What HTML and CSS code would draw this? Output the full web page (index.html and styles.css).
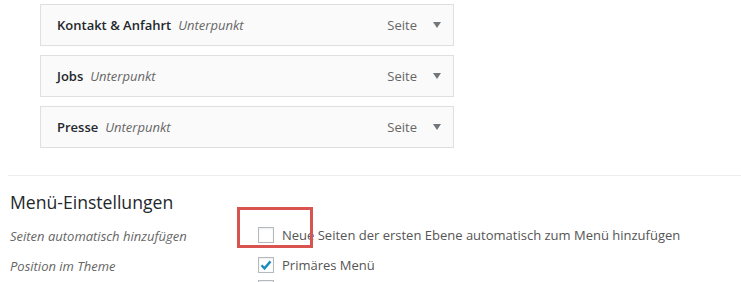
FILE: index.html
```html
<!DOCTYPE html>
<html lang="de">
<head>
  <meta charset="UTF-8">
  <title>Menüs</title>
  <link rel="stylesheet" href="styles.css">
</head>
<body>
  <!-- Menu items -->
  <ul class="menu-items">
    <li class="menu-item">
      <span class="item-title">Kontakt &amp; Anfahrt</span>
      <span class="item-sub">Unterpunkt</span>
      <span class="item-type">Seite</span>
      <span class="item-arrow"></span>
    </li>
    <li class="menu-item">
      <span class="item-title">Jobs</span>
      <span class="item-sub">Unterpunkt</span>
      <span class="item-type">Seite</span>
      <span class="item-arrow"></span>
    </li>
    <li class="menu-item">
      <span class="item-title">Presse</span>
      <span class="item-sub">Unterpunkt</span>
      <span class="item-type">Seite</span>
      <span class="item-arrow"></span>
    </li>
  </ul>

  <!-- Menu settings -->
  <div class="menu-settings">
    <h3>Menü-Einstellungen</h3>
    <div class="setting-row">
      <div class="setting-label">Seiten automatisch hinzufügen</div>
      <div class="setting-control highlight-wrap">
        <label class="check"><span class="box"></span>Neue Seiten der ersten Ebene automatisch zum Menü hinzufügen</label>
        <span class="highlight"></span>
      </div>
    </div>
    <div class="setting-row">
      <div class="setting-label">Position im Theme</div>
      <div class="setting-control">
        <label class="check"><span class="box checked">
          <svg viewBox="0 0 16 16" width="16" height="16"><path d="M3.5 8.2l3 3.2 6-7" fill="none" stroke="#1e8cbe" stroke-width="2.4"/></svg>
        </span>Primäres Menü</label>
        <label class="check"><span class="box"></span>&nbsp;</label>
      </div>
    </div>
  </div>
</body>
</html>
```

FILE: styles.css
```css
body {
  margin: 0;
  background-color: #ffffff;
  font-family: "Open Sans", "Liberation Sans", sans-serif;
  font-size: 13px;
  color: #444;
  overflow: hidden;
  height: 282px;
}

.menu-items {
  list-style: none;
  margin: 0;
  padding: 4px 0 0 40px;
}

.menu-item {
  display: flex;
  align-items: center;
  box-sizing: border-box;
  width: 414px;
  height: 42px;
  margin-bottom: 9px;
  padding: 0 12px 0 16px;
  background-color: #fafafa;
  border: 1px solid #dfdfdf;
}

.item-title {
  font-weight: 600;
  color: #23282d;
}

.item-sub {
  margin-left: 7px;
  font-style: italic;
  color: #666;
}

.item-type {
  margin-left: auto;
  color: #666;
}

.item-arrow {
  margin-left: 16px;
  width: 0;
  height: 0;
  border-left: 4px solid transparent;
  border-right: 4px solid transparent;
  border-top: 6px solid #72777c;
}

.menu-settings {
  margin: 27px 0 0 8px;
  border-top: 1px solid #eeeeee;
  padding-left: 2px;
}

.menu-settings h3 {
  margin: 14px 0 8px;
  font-size: 17.6px;
  font-weight: 400;
  color: #23282d;
}

.setting-row {
  display: flex;
  align-items: flex-start;
}

.setting-label {
  width: 248px;
  padding-top: 5px;
  font-style: italic;
  color: #666;
}

.setting-control {
  display: flex;
  flex-direction: column;
  gap: 5px;
  padding-top: 4px;
  margin-bottom: 8px;
}

.check {
  display: flex;
  align-items: center;
  font-size: 13px;
  color: #555;
  line-height: 18px;
}

.box {
  box-sizing: border-box;
  width: 16px;
  height: 16px;
  margin-right: 8px;
  border: 1px solid #b4b9be;
  background-color: #fff;
  box-shadow: inset 0 1px 2px rgba(0, 0, 0, 0.08);
  position: relative;
}

.box svg {
  position: absolute;
  left: -1px;
  top: -1px;
}

.highlight-wrap {
  position: relative;
}

.highlight {
  position: absolute;
  left: -21px;
  top: -15px;
  width: 76px;
  height: 41px;
  box-sizing: border-box;
  border: 3px solid #d9534f;
}
```
